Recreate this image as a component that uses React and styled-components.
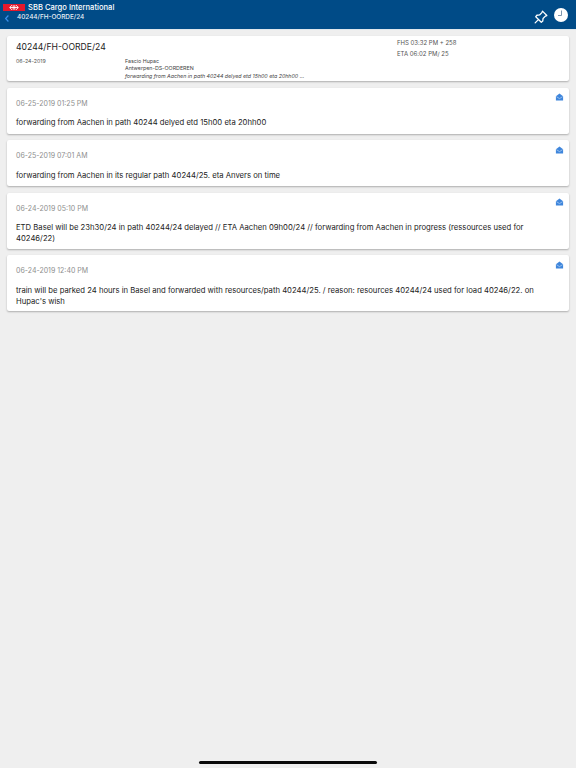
import styled, { createGlobalStyle } from "styled-components";

const messages = [
  {
    date: "06-25-2019 01:25 PM",
    text: "forwarding from Aachen in path 40244 delyed etd 15h00 eta 20hh00",
    height: 46,
  },
  {
    date: "06-25-2019 07:01 AM",
    text: "forwarding from Aachen in its regular path 40244/25. eta Anvers on time",
    height: 46,
  },
  {
    date: "06-24-2019 05:10 PM",
    text: "ETD Basel will be 23h30/24 in path 40244/24 delayed // ETA Aachen 09h00/24 // forwarding from Aachen in progress (ressources used for 40246/22)",
    height: 56,
  },
  {
    date: "06-24-2019 12:40 PM",
    text: "train will be parked 24 hours in Basel and forwarded with resources/path 40244/25. / reason: resources 40244/24 used for load 40246/22. on Hupac's wish",
    height: 56,
  },
];

function MailIcon() {
  return (
    <MailSvg viewBox="0 0 8 8">
      <path d="M0.4 3.2 L4 0.4 L7.6 3.2 L7.6 7.4 L0.4 7.4 Z" fill="#3f86dc" />
      <path d="M0.8 3.6 L4 5.6 L7.2 3.6" fill="none" stroke="#cfe2f8" strokeWidth="0.6" />
    </MailSvg>
  );
}

function App() {
  return (
    <>
      <GlobalStyle />
      <Page>
        <Header>
          <HeaderLeft>
            <BrandRow>
              <Flag viewBox="0 0 22 7">
                <rect width="22" height="7" fill="#e3192c" />
                <path
                  d="M9 1.2 L6.6 3.5 L9 5.8 M13 1.2 L15.4 3.5 L13 5.8 M7 3.5 H15 M10.2 1.2 V5.8 M11.8 1.2 V5.8"
                  fill="none"
                  stroke="#fff"
                  strokeWidth="0.9"
                />
              </Flag>
              <Brand>SBB Cargo International</Brand>
            </BrandRow>
            <NavRow>
              <BackIcon viewBox="0 0 4 7">
                <path d="M3.4 0.5 L0.6 3.5 L3.4 6.5" fill="none" stroke="#3a90ea" strokeWidth="1.2" />
              </BackIcon>
              <Crumb>40244/FH-OORDE/24</Crumb>
            </NavRow>
          </HeaderLeft>
          <HeaderIcons>
            <PinIcon viewBox="0 0 24 24">
              <path
                d="M14.5 2 L22 9.5 L19.5 10.5 L15.5 14.5 L15 19 L12.5 21 L3 11.5 L5 9 L9.5 8.5 L13.5 4.5 Z M7.5 16.5 L2 22"
                fill="none"
                stroke="#fff"
                strokeWidth="2.2"
                strokeLinejoin="round"
                strokeLinecap="round"
              />
            </PinIcon>
            <ClockIcon viewBox="0 0 14 14">
              <circle cx="7" cy="7" r="7" fill="#fff" />
              <path d="M7.5 2.5 V7.5 H4" fill="none" stroke="#6f8aa5" strokeWidth="0.9" />
            </ClockIcon>
          </HeaderIcons>
        </Header>
        <Content>
          <SummaryCard>
            <SummaryLeft>
              <Title>40244/FH-OORDE/24</Title>
              <SummaryDate>06-24-2019</SummaryDate>
            </SummaryLeft>
            <SummaryMiddle>
              <SmallText>Fascio Hupac</SmallText>
              <SmallText>Antwerpen-DS-OORDEREN</SmallText>
              <SmallItalic>forwarding from Aachen in path 40244 delyed etd 15h00 eta 20hh00 ...</SmallItalic>
            </SummaryMiddle>
            <SummaryRight>
              <TimeLine>FHS 03:32 PM + 258</TimeLine>
              <TimeLine>ETA 06:02 PM/ 25</TimeLine>
            </SummaryRight>
          </SummaryCard>
          {messages.map((message) => (
            <MessageCard key={message.date} $height={message.height}>
              <MailIcon />
              <MessageDate>{message.date}</MessageDate>
              <MessageText>{message.text}</MessageText>
            </MessageCard>
          ))}
        </Content>
        <HomeBar />
      </Page>
    </>
  );
}

const GlobalStyle = createGlobalStyle`
  html, body {
    margin: 0;
    padding: 0;
    background: #efefef;
  }
  * {
    box-sizing: border-box;
  }
`;

const Page = styled.div`
  position: relative;
  width: 576px;
  height: 768px;
  overflow: hidden;
  background: #efefef;
  font-family: Inter, "Liberation Sans", sans-serif;
  color: #222;
`;

const Header = styled.header`
  display: flex;
  justify-content: space-between;
  height: 30px;
  background: #004b87;
  border-bottom: 1px solid #dfe7ec;
`;

const HeaderLeft = styled.div`
  display: flex;
  flex-direction: column;
  gap: 0;
  padding: 3px 0 0 3px;
`;

const BrandRow = styled.div`
  display: flex;
  align-items: center;
  gap: 3px;
  height: 9px;
`;

const Flag = styled.svg`
  width: 22px;
  height: 7px;
`;

const Brand = styled.span`
  color: #fff;
  font-size: 7.6px;
  font-weight: 500;
  line-height: 9px;
`;

const NavRow = styled.div`
  display: flex;
  align-items: center;
  gap: 8px;
  padding-left: 2px;
`;

const BackIcon = styled.svg`
  width: 4px;
  height: 7px;
  margin-top: 2px;
`;

const Crumb = styled.span`
  color: #e8f0f6;
  font-size: 6.4px;
  font-weight: 500;
  line-height: 10px;
`;

const HeaderIcons = styled.div`
  display: flex;
  align-items: flex-start;
  gap: 6px;
  padding: 8px 8px 0 0;
`;

const PinIcon = styled.svg`
  width: 14px;
  height: 14px;
  margin-top: 2px;
`;

const ClockIcon = styled.svg`
  width: 14px;
  height: 14px;
`;

const Content = styled.main`
  display: flex;
  flex-direction: column;
  gap: 6.5px;
  padding: 6px 7px 0;
`;

const Card = styled.section`
  background: #fff;
  border-radius: 2px;
  box-shadow: 0 1px 2px rgba(0, 0, 0, 0.28);
`;

const SummaryCard = styled(Card)`
  display: flex;
  height: 45px;
  padding-left: 9px;
`;

const SummaryLeft = styled.div`
  width: 109px;
  padding-top: 5px;
`;

const Title = styled.div`
  font-size: 8.65px;
  line-height: 13px;
  margin-bottom: 4px;
`;

const SmallText = styled.div`
  font-size: 5.3px;
  line-height: 7.5px;
  color: #444;
`;

const SummaryDate = styled(SmallText)`
  color: #555;
`;

const SmallItalic = styled(SmallText)`
  font-style: italic;
  white-space: nowrap;
`;

const SummaryMiddle = styled.div`
  width: 272px;
  padding-top: 21.5px;
`;

const SummaryRight = styled.div`
  padding-top: 0.5px;
`;

const TimeLine = styled.div`
  font-size: 6px;
  line-height: 11px;
  color: #555;
`;

const MessageCard = styled(Card)`
  position: relative;
  height: ${(props) => props.$height}px;
  padding: 11px 9px 0;
`;

const MailSvg = styled.svg`
  position: absolute;
  top: 5.5px;
  right: 5px;
  width: 9px;
  height: 8px;
`;

const MessageDate = styled.div`
  font-size: 7px;
  line-height: 9px;
  color: #8e8e8e;
  margin-bottom: 9.5px;
`;

const MessageText = styled.div`
  font-size: 7.7px;
  line-height: 11px;
  color: #222;
`;

const HomeBar = styled.div`
  position: absolute;
  left: 199px;
  bottom: 4px;
  width: 178px;
  height: 3px;
  border-radius: 2px;
  background: #0a0a0a;
`;

export default App;
